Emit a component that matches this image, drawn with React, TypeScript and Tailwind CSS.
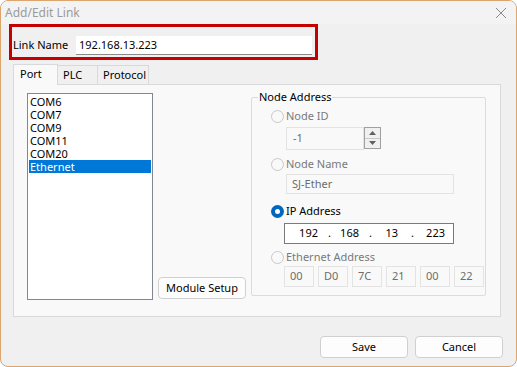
import React from 'react';

const font = { fontFamily: '"Noto Sans", "Segoe UI", sans-serif' };

function Radio({ checked, disabled, label }: { checked?: boolean; disabled?: boolean; label: string }) {
  return (
    <div className="flex items-center h-[16px]">
      {checked ? (
        <span className="w-[13px] h-[13px] rounded-full bg-[#0067c0] flex items-center justify-center">
          <span className="w-[5px] h-[5px] rounded-full bg-white" />
        </span>
      ) : (
        <span className="w-[13px] h-[13px] rounded-full border border-[#c8c8c8] bg-[#f9f9f9]" />
      )}
      <span className={`ml-[2px] text-[11px] ${disabled ? 'text-[#7a7a7a]' : 'text-black'}`}>{label}</span>
    </div>
  );
}

function Btn({ label }: { label: string }) {
  return (
    <button className="w-[88px] h-[22px] shrink-0 rounded-[4px] border border-[#d0d0d0] bg-[#fdfdfd] text-[11px] text-black flex items-center justify-center">
      {label}
    </button>
  );
}

export default function App() {
  const ports = ['COM6', 'COM7', 'COM9', 'COM11', 'COM20', 'Ethernet'];
  const mac = ['00', 'D0', '7C', '21', '00', '22'];

  return (
    <div style={font} className="w-[517px] h-[367px] bg-[#f0f0f0] border border-[#dba56e] rounded-[8px] overflow-hidden flex flex-col">
      {/* title bar */}
      <div className="h-[23px] flex items-center justify-between pl-[4px] pr-[9px] bg-[#f3f3f3]">
        <span className="text-[12px] text-[#9b9b9b]">Add/Edit Link</span>
        <svg width="12" height="12" viewBox="0 0 12 12">
          <path d="M1 1L11 11M11 1L1 11" stroke="#8a8a8a" strokeWidth="1" />
        </svg>
      </div>

      {/* link name */}
      <div className="ml-[8px] w-[309px] h-[36px] border-[3px] border-[#c40000] flex items-end pb-[2px] pr-[3px]">
        <span className="text-[11px] text-black ml-[1px] mb-[2px] w-[63px]">Link Name</span>
        <div className="flex-1 h-[19px] bg-white border-b border-[#8a8a8a] flex items-center pl-[3px] text-[11px] text-black">
          192.168.13.223
        </div>
      </div>

      {/* tabs */}
      <div className="ml-[12px] mt-[3px] flex items-end h-[21px]">
        <div className="w-[45px] h-[21px] bg-[#f9f9f9] border border-b-0 border-[#d9d9d9] text-[11px] pl-[6px] pt-[1px] relative z-10 -mb-[1px]">Port</div>
        <div className="w-[40px] h-[19px] bg-[#f0f0f0] border border-l-0 border-b-0 border-[#d9d9d9] text-[11px] pl-[5px] pt-[1px]">PLC</div>
        <div className="w-[51px] h-[19px] bg-[#f0f0f0] border border-l-0 border-b-0 border-[#d9d9d9] text-[11px] pl-[5px] pt-[1px]">Protocol</div>
      </div>

      {/* tab panel */}
      <div className="ml-[12px] w-[488px] h-[233px] bg-[#f9f9f9] border border-[#d9d9d9] flex pl-[13px] pt-[8px]">
        <div className="w-[126px] h-[207px] shrink-0 bg-white border border-[#828790] pt-[1px] px-[1px]">
          {ports.map((p) => (
            <div
              key={p}
              className={`h-[13px] leading-[13px] text-[11px] pl-[1px] ${p === 'Ethernet' ? 'bg-[#0078d7] text-white' : 'text-black'}`}
            >
              {p}
            </div>
          ))}
        </div>

        <div className="ml-[5px] h-[206px] flex flex-col justify-end shrink-0">
          <Btn label="Module Setup" />
        </div>

        <fieldset className="ml-[5px] -mt-[4px] w-[235px] h-[207px] shrink-0 border border-[#dcdcdc] rounded-[2px]">
          <legend className="ml-[6px] px-[1px] text-[11px] text-black leading-[16px]">Node Address</legend>

          <div className="pl-[19px] pt-[3px]">
            <Radio disabled label="Node ID" />
            <div className="ml-[15px] mt-[3px] flex">
              <div className="w-[78px] h-[23px] border border-[#e3e3e3] bg-[#f9f9f9] text-[11px] text-[#6d6d6d] pl-[6px] flex items-center">-1</div>
              <div className="w-[17px] h-[22px] border border-[#a0a0a0] bg-[#f0f0f0] flex flex-col">
                <div className="flex-1 flex items-center justify-center border-b border-[#c8c8c8]">
                  <svg width="7" height="4" viewBox="0 0 7 4"><path d="M0 4L3.5 0L7 4Z" fill="#606060" /></svg>
                </div>
                <div className="flex-1 flex items-center justify-center">
                  <svg width="7" height="4" viewBox="0 0 7 4"><path d="M0 0L3.5 4L7 0Z" fill="#606060" /></svg>
                </div>
              </div>
            </div>

            <div className="mt-[6px]"><Radio disabled label="Node Name" /></div>
            <div className="ml-[15px] mt-[2px] w-[168px] h-[20px] border border-[#e3e3e3] bg-[#f9f9f9] text-[11px] text-[#6d6d6d] pl-[5px] flex items-center">SJ-Ether</div>

            <div className="mt-[9px]"><Radio checked label="IP Address" /></div>
            <div className="ml-[13px] mt-[4px] w-[170px] h-[21px] border border-[#7a7a7a] bg-white text-[11px] text-black flex items-center">
              <span className="w-[33px] text-right">192</span>
              <span className="w-[13px] text-right">.</span>
              <span className="w-[28px] text-right">168</span>
              <span className="w-[13px] text-right">.</span>
              <span className="w-[26px] text-right">13</span>
              <span className="w-[16px] text-right">.</span>
              <span className="w-[31px] text-right">223</span>
            </div>

            <div className="mt-[5px]"><Radio disabled label="Ethernet Address" /></div>
            <div className="ml-[13px] mt-[1px] flex gap-[4px]">
              {mac.map((m, i) => (
                <div key={i} className="w-[30px] h-[21px] border border-[#e3e3e3] bg-[#f9f9f9] text-[11px] text-[#6d6d6d] pl-[5px] flex items-center">
                  {m}
                </div>
              ))}
            </div>
          </div>
        </fieldset>
      </div>

      {/* bottom buttons */}
      <div className="flex justify-end gap-[7px] mt-[19px] pr-[13px]">
        <Btn label="Save" />
        <Btn label="Cancel" />
      </div>
    </div>
  );
}
